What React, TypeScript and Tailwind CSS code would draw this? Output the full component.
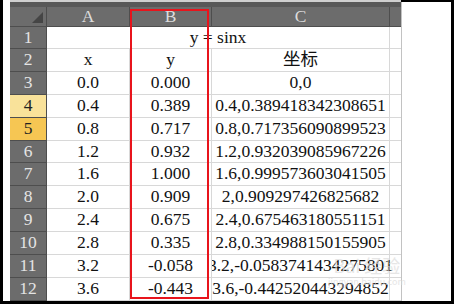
import React from 'react';

const rowHeights = [22, 23, 23, 23, 23, 22, 23, 23, 23, 23, 23, 23];

const data: [string, string, string][] = [
  ['x', 'y', '坐标'],
  ['0.0', '0.000', '0,0'],
  ['0.4', '0.389', '0.4,0.389418342308651'],
  ['0.8', '0.717', '0.8,0.717356090899523'],
  ['1.2', '0.932', '1.2,0.932039085967226'],
  ['1.6', '1.000', '1.6,0.999573603041505'],
  ['2.0', '0.909', '2,0.909297426825682'],
  ['2.4', '0.675', '2.4,0.675463180551151'],
  ['2.8', '0.335', '2.8,0.334988150155905'],
  ['3.2', '-0.058', '3.2,-0.0583741434275801'],
  ['3.6', '-0.443', '3.6,-0.442520443294852'],
];

const rowLabelBg = (n: number) => {
  if (n === 4) return 'bg-[#f9e29a] text-[#222]';
  if (n === 5) return 'bg-[#f6c653] text-[#222]';
  return 'bg-[#6c6c6c] text-[#e4e4e4]';
};

const App: React.FC = () => {
  return (
    <div className="w-[454px] h-[304px] bg-black flex pl-[3px] pr-[3px] pb-[3px] relative overflow-hidden font-['Liberation_Serif','Noto_Sans_CJK_SC',serif] text-[17.5px] leading-none">
      <div className="w-[7px] bg-white" />

      <div className="w-[391px] flex flex-col">
        <div className="h-[2px] bg-[#cfcfcf]" />
        <div className="h-[5px] bg-[#585858]" />

        {/* column header */}
        <div className="h-[20px] flex bg-[#6c6c6c] text-[#dcdcdc] border-b border-[#4e4e4e]">
          <div className="w-[37px] border-r border-[#4e4e4e] flex items-end justify-end pr-[3px] pb-[3px]">
            <svg width="11" height="11" viewBox="0 0 11 11">
              <polygon points="11,0 11,11 0,11" fill="#454545" />
            </svg>
          </div>
          <div className="w-[83px] border-r border-[#4e4e4e] flex items-center justify-center">A</div>
          <div className="w-[82px] border-r border-[#4e4e4e] flex items-center justify-center">B</div>
          <div className="w-[178px] border-r border-[#4e4e4e] flex items-center justify-center">C</div>
          <div className="flex-1" />
        </div>

        {rowHeights.map((h, i) => {
          const n = i + 1;
          const row = n === 1 ? null : data[i - 1];
          return (
            <div key={n} className="flex" style={{ height: h }}>
              <div className={`w-[37px] border-b border-r border-[#4e4e4e] flex items-center justify-center ${rowLabelBg(n)}`}>
                {n}
              </div>
              {row === null ? (
                <div className="w-[343px] bg-white border-b border-r border-[#d8d8d8] flex items-center justify-center text-[#111]">
                  y = sinx
                </div>
              ) : (
                <>
                  <div className="w-[83px] bg-white border-b border-r border-[#d8d8d8] flex items-center justify-center text-[#111]">
                    {row[0]}
                  </div>
                  <div className="w-[82px] bg-white border-b border-r border-[#d8d8d8] flex items-center justify-center text-[#111]">
                    {row[1]}
                  </div>
                  <div className="w-[178px] bg-white border-b border-r border-[#d8d8d8] flex items-center justify-center text-[#111] [clip-path:inset(0_-20px_0_0)] relative z-10">
                    <span className="whitespace-nowrap">{row[2]}</span>
                  </div>
                </>
              )}
              <div className="flex-1 bg-white border-b border-[#d8d8d8]" />
            </div>
          );
        })}
      </div>

      <div className="flex-1 bg-white border-l border-[#c2c2c2] mt-[2px]" />

      {/* selection frame */}
      <div className="absolute left-[130px] top-[9px] w-[79px] h-[290px] border-2 border-[#e8141c] z-20" />

      {/* watermark */}
      <div className="absolute left-[328px] top-[256px] z-20 flex flex-col items-center text-[#dcdcdc] opacity-70 font-['Noto_Sans_CJK_SC',sans-serif]">
        <span className="text-[18px] leading-none">Bai 经验</span>
        <span className="text-[9px] leading-none mt-[3px]">jingyan.baidu.com</span>
      </div>
    </div>
  );
};

export default App;
